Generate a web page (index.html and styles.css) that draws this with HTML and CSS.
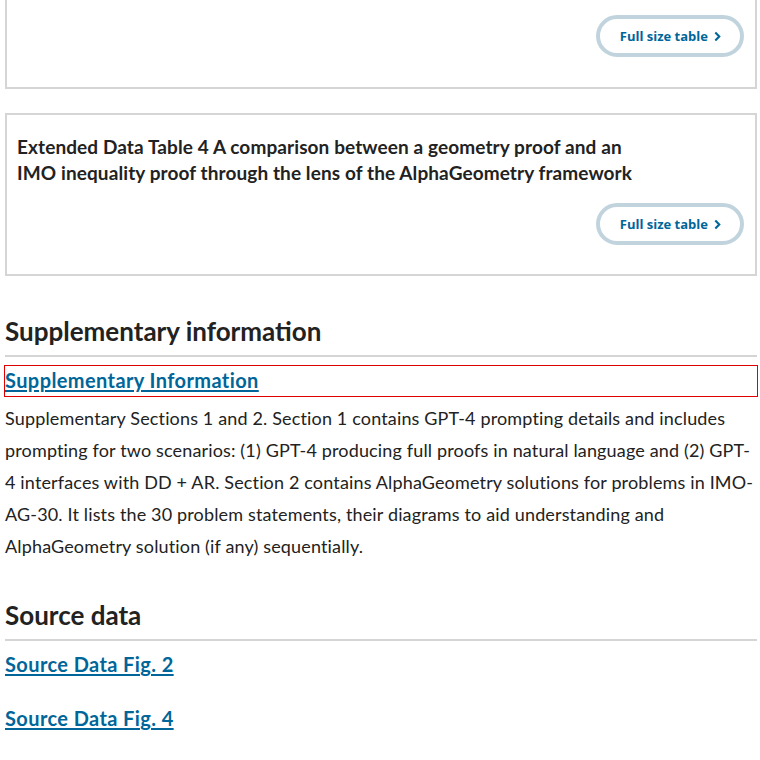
FILE: index.html
```html
<!DOCTYPE html>
<html lang="en">
<head>
<meta charset="utf-8">
<title>Supplementary information</title>
<link rel="stylesheet" href="styles.css">
</head>
<body>
<main class="page">
  <div class="table-box first">
    <div class="table-actions">
      <a class="btn" href="#">Full size table <svg class="chev" viewBox="0 0 8 12" width="7" height="11"><path d="M1.5 1.5 L6 6 L1.5 10.5" fill="none" stroke="currentColor" stroke-width="2.4"/></svg></a>
    </div>
  </div>
  <div class="table-box">
    <h3 class="table-title">Extended Data Table 4 A comparison between a geometry proof and an IMO inequality proof through the lens of the AlphaGeometry framework</h3>
    <div class="table-actions">
      <a class="btn" href="#">Full size table <svg class="chev" viewBox="0 0 8 12" width="7" height="11"><path d="M1.5 1.5 L6 6 L1.5 10.5" fill="none" stroke="currentColor" stroke-width="2.4"/></svg></a>
    </div>
  </div>

  <section class="section">
    <h2 class="section-title">Supplementary information</h2>
    <div class="supp-item focused">
      <a class="supp-link" href="#">Supplementary Information</a>
    </div>
    <p class="supp-desc">Supplementary Sections 1 and 2. Section 1 contains GPT-4 prompting details and includes prompting for two scenarios: (1) GPT-4 producing full proofs in natural language and (2) GPT-4 interfaces with DD + AR. Section 2 contains AlphaGeometry solutions for problems in IMO-AG-30. It lists the 30 problem statements, their diagrams to aid understanding and AlphaGeometry solution (if any) sequentially.</p>
  </section>

  <section class="section">
    <h2 class="section-title">Source data</h2>
    <div class="supp-item"><a class="supp-link" href="#">Source Data Fig. 2</a></div>
    <div class="supp-item"><a class="supp-link" href="#">Source Data Fig. 4</a></div>
  </section>
</main>
</body>
</html>
```

FILE: styles.css
```css
html, body {
  margin: 0;
  padding: 0;
  background: #fff;
}
body {
  font-family: Lato, "Open Sans", sans-serif;
  color: #222;
}
.page {
  width: 752px;
  padding-left: 5px;
}
.table-box {
  border: 2px solid #d5d5d5;
  padding: 19px 11px 29px 10px;
  margin-bottom: 24px;
}
.table-box.first {
  border-top: none;
  margin-top: -2px;
  padding-top: 17px;
  padding-bottom: 30px;
}
.table-title {
  margin: 0 0 17px;
  font-size: 19px;
  line-height: 26px;
  font-weight: 700;
  letter-spacing: 0.1px;
  max-width: 625px;
  color: #222;
}
.table-actions {
  display: flex;
  justify-content: flex-end;
}
.btn {
  display: inline-flex;
  align-items: center;
  gap: 6px;
  height: 34px;
  padding: 0 19px 0 20px;
  border: 4px solid #c1d4de;
  border-radius: 22px;
  font-family: "Open Sans", Lato, sans-serif;
  font-size: 13px;
  font-weight: 700;
  color: #006699;
  text-decoration: none;
}
.chev {
  display: block;
}
.section-title {
  margin: 0;
  padding-top: 15px;
  padding-bottom: 8px;
  font-size: 26px;
  line-height: 32px;
  font-weight: 700;
  border-bottom: 2px solid #d5d5d5;
}
.supp-item {
  margin-top: 9px;
  line-height: 28px;
}
.supp-item.focused {
  outline: 1px solid #e00000;
}
.supp-link {
  font-size: 20px;
  font-weight: 700;
  letter-spacing: 0.4px;
  color: #006699;
  text-decoration: underline;
  text-underline-offset: 2px;
}
.supp-desc {
  margin: 6px 0 22px;
  font-size: 18px;
  line-height: 32px;
  letter-spacing: 0.15px;
}
.section + .section .supp-item + .supp-item {
  margin-top: 24px;
}
```
